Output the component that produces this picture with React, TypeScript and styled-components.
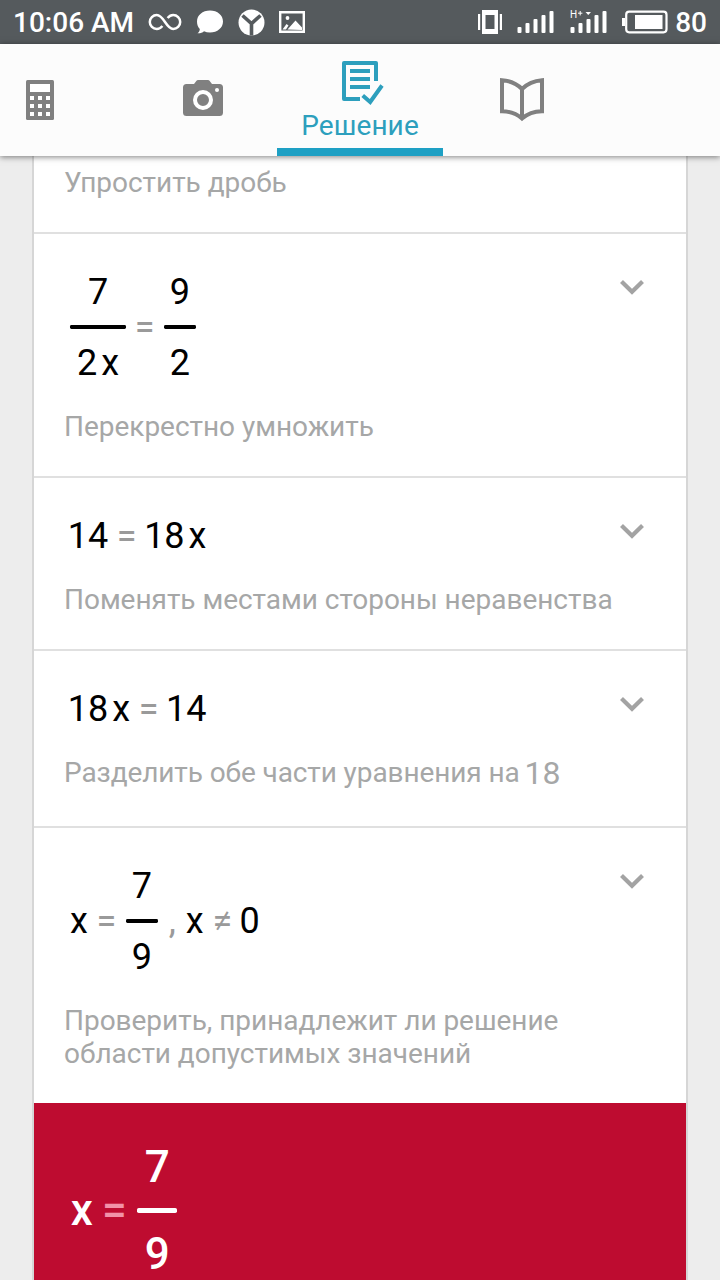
import React from "react";
import styled, { createGlobalStyle } from "styled-components";

const GlobalStyle = createGlobalStyle`
  * { box-sizing: border-box; }
  body { margin: 0; font-family: Roboto, "Liberation Sans", sans-serif; background: #ededed; overflow: hidden; }
  svg { display: block; flex: none; }
`;

const Screen = styled.div`
  display: flex;
  flex-direction: column;
  width: 720px;
  height: 1280px;
  overflow: hidden;
  background: #ededed;
`;

const StatusBar = styled.div`
  display: flex;
  flex: none;
  align-items: center;
  justify-content: space-between;
  height: 44px;
  padding: 0 13px 0 13px;
  background: #555a5d;
  color: #fff;
`;

const StatusGroup = styled.div<{ $gap: number }>`
  display: flex;
  align-items: center;
  gap: ${(p) => p.$gap}px;
`;

const StatusText = styled.span`
  padding-top: 1px;
  font-size: 28px;
  line-height: 43px;
  font-weight: 500;
`;

const TabBar = styled.nav`
  position: relative;
  z-index: 1;
  display: flex;
  flex: none;
  height: 112px;
  background: #fcfcfc;
  box-shadow: 0 1px 6px rgba(0, 0, 0, 0.5);
`;

const Tab = styled.div<{ $width: number; $inset?: number; $active?: boolean }>`
  display: flex;
  flex-direction: column;
  flex: none;
  align-items: center;
  justify-content: ${(p) => (p.$active ? "flex-start" : "center")};
  width: ${(p) => p.$width}px;
  padding-top: ${(p) => (p.$active ? "17px" : "0")};
  padding-left: ${(p) => p.$inset ?? 0}px;
  border-bottom: ${(p) => (p.$active ? "8px solid #1ea0c4" : "none")};
  color: ${(p) => (p.$active ? "#2d9fbd" : "#808080")};
`;

const TabLabel = styled.span`
  margin-top: 4px;
  font-size: 28px;
  line-height: 34px;
  letter-spacing: 0.1px;
`;

const Card = styled.main`
  flex: none;
  width: 656px;
  margin: 0 32px;
  border: solid #d6d6d6;
  border-width: 0 2px;
  background: #fff;
`;

const Step = styled.section<{ $top?: number }>`
  display: flex;
  flex-direction: column;
  gap: 26px;
  padding: ${(p) => p.$top ?? 37}px 30px 33px;
  & + & { border-top: 2px solid #e0e0e0; }
`;

const StepHead = styled.div`
  display: flex;
  align-items: flex-start;
  justify-content: space-between;
  padding: 0 11px 0 3px;
`;

const Answer = styled.section`
  display: flex;
  height: 200px;
  padding: 39px 33px 0;
  background: #be0c30;
`;

const Caption = styled.p<{ $tall?: boolean }>`
  margin: 0;
  height: ${(p) => (p.$tall ? "37px" : "auto")};
  color: #a6a7a7;
  font-size: 28px;
  line-height: 33px;
  letter-spacing: ${(p) => (p.$tall ? "-0.1px" : "-0.03px")};
  white-space: nowrap;
`;

const CaptionNumber = styled.span`
  margin-left: -2px;
  font-size: 32px;
  line-height: 0;
  letter-spacing: 0;
  vertical-align: -2px;
`;

const Equation = styled.div<{ $answer?: boolean }>`
  display: flex;
  align-items: center;
  color: ${(p) => (p.$answer ? "#fff" : "#000")};
  font-size: ${(p) => (p.$answer ? 44 : 36)}px;
  font-weight: ${(p) => (p.$answer ? 500 : 400)};
  line-height: 1.1667;
  align-self: flex-start;
  --sign: ${(p) => (p.$answer ? "#f292a8" : "#9a9a9a")};
`;

const Sign = styled.span<{ $tight?: boolean }>`
  margin: ${(p) => (p.$tight ? "0 0.19em 0 0.21em" : "0 0.21em 0 0.24em")};
  color: var(--sign);
`;

const Comma = styled.span`
  margin: 0 0.27em 0 0.3em;
  color: var(--sign);
`;

const Variable = styled.span<{ $first?: boolean }>`
  margin-left: ${(p) => (p.$first ? "0.085em" : "0")};
`;

const Product = styled.span<{ $first?: boolean }>`
  display: flex;
  gap: 0.11em;
  margin-left: ${(p) => (p.$first ? "0.02em" : "0")};
`;

const Constant = styled.span`
  margin-left: 0.02em;
`;

const Fraction = styled.span<{ $first?: boolean }>`
  display: flex;
  flex-direction: column;
  align-items: center;
  margin-left: ${(p) => (p.$first ? "0.083em" : "0.05em")};
`;

const Bar = styled.span<{ $wide?: boolean }>`
  width: ${(p) => (p.$wide ? "1.556em" : "0.9em")};
  height: 0.111em;
  margin: 0.333em 0 0.361em;
  border-radius: 0.04em;
  background: currentColor;
`;

const ChevronIcon = styled.svg`
  margin-top: 8px;
`;

const Chevron = () => (
  <ChevronIcon width="26" height="18" viewBox="0 0 26 18">
    <path d="M2.500 2.500 13 12.800 23.500 2.500" fill="none" stroke="#a3a3a3" strokeWidth="4.200" />
  </ChevronIcon>
);

const InfinityIcon = () => (
  <svg width="34" height="20" viewBox="0 0 34 20" fill="none" stroke="#fff" strokeWidth="2.500">
    <path d="M14.400 14C12.800 15.900 11.100 17 8.800 17a7 7 0 0 1 0-14C12 3 14 5.500 17 10s5 7 8.200 7a7 7 0 0 0 0-14c-2.300 0-4 1.100-5.600 3" />
  </svg>
);

const ChatIcon = () => (
  <svg width="28" height="24" viewBox="0 0 28 24" fill="#fff">
    <path d="M14 .5c7.500 0 13 4.700 13 11s-5.500 11-13 11c-2.300 0-4.300-.4-6-1.200-1.600 1.500-4 2.200-6.500 2 1.400-1 2.300-2.500 2.300-4.300C2 17 1 14.500 1 11.500 1 5.200 6.500.5 14 .5Z" />
  </svg>
);

const BrowserIcon = () => (
  <svg width="27" height="27" viewBox="0 0 27 27">
    <circle cx="13.500" cy="13.500" r="13" fill="#fff" />
    <path d="M4.500 6.500 13.500 14.500 22.500 6.500M13.500 14v12.500" fill="none" stroke="#555a5d" strokeWidth="3.600" />
  </svg>
);

const PictureIcon = () => (
  <svg width="26" height="22" viewBox="0 0 26 22">
    <path d="M1.200 1.200h23.600v19.600H1.200z" fill="none" stroke="#fff" strokeWidth="2.400" />
    <circle cx="8.500" cy="7" r="1.900" fill="#fff" />
    <path d="M3.500 18.500 7.500 13l2 1.500-2.500 4zM8.500 18.500l8-9 6.500 7v2.500z" fill="#fff" />
  </svg>
);

const VibrateIcon = () => (
  <svg width="24" height="24" viewBox="0 0 24 24" fill="#fff">
    <path d="M0 4h2.200v16H0zM21.800 4H24v16h-2.200z" />
    <path fillRule="evenodd" d="M4 0h16v24H4zM7.500 5v14h9V5z" />
  </svg>
);

const SignalIcon = ({ data = false }: { data?: boolean }) => (
  <svg width="37" height="24" viewBox="0 0 37 24" fill="#fff">
    <rect x="0.500" y="17" width="4" height="6" rx="1" />
    <rect x="8.500" y="13" width="4" height="10" rx="1" />
    <rect x="16.500" y="9" width="4" height="14" rx="1" />
    <rect x="24.500" y="5" width="4" height="18" rx="1" />
    <rect x="32.500" y="1" width="4" height="22" rx="1" />
    {data && (
      <>
        <text x="0" y="8" fontSize="10">H</text>
        <path d="M8 3.200h4.400M10.200 1v4.400" stroke="#fff" strokeWidth="1" />
        <path d="M15.500 2h5.500l-2.750 3z" />
      </>
    )}
  </svg>
);

const BatteryIcon = () => (
  <svg width="46" height="24" viewBox="0 0 46 24">
    <rect x="4.200" y="1.700" width="40.300" height="20.600" rx="3" fill="none" stroke="#fff" strokeWidth="2.200" />
    <path d="M0 8h3v8H0z" fill="#fff" />
    <rect x="13" y="5" width="27.500" height="14" fill="#fff" />
  </svg>
);

const CalculatorIcon = () => (
  <svg width="28" height="40" viewBox="0 0 28 40" fill="currentColor">
    <rect width="28" height="40" rx="1.500" />
    <path fill="#fff" d="M4 4h20v8H4zM4 16h4v4H4zM12 16h4v4h-4zM20 16h4v4h-4zM4 24h4v4H4zM12 24h4v4h-4zM20 24h4v4h-4zM4 32h4v4H4zM12 32h4v4h-4zM20 32h4v4h-4z" />
  </svg>
);

const CameraSvg = styled.svg`
  margin-top: -4px;
`;

const CameraIcon = () => (
  <CameraSvg width="40" height="36" viewBox="0 0 40 36" fill="currentColor">
    <path d="M3.500 4H11l2.500-3.200Q14 0 15 0h10q1 0 1.500.8L29 4h7.500Q40 4 40 7.500v25q0 3.500-3.500 3.500h-33Q0 36 0 32.500v-25Q0 4 3.500 4Z" />
    <circle cx="20" cy="20" r="8" fill="none" stroke="#fff" strokeWidth="4" />
    <circle cx="34" cy="10" r="2" fill="#fff" />
  </CameraSvg>
);

const SolutionIcon = () => (
  <svg width="48" height="44" viewBox="0 0 48 44" fill="none" stroke="currentColor" strokeWidth="4">
    <path d="M24 38H8V2H40V20" strokeLinejoin="round" />
    <path d="M14 10h20M14 18h20M14 26h20" />
    <path d="M26.700 34.500 34.200 41 46 24.500" />
  </svg>
);

const BookIcon = () => (
  <svg width="44" height="44" viewBox="0 0 44 44" fill="none" stroke="currentColor" strokeWidth="4">
    <path d="M2 2.200Q14 3 22 11 30 3 42 2.200V33.200Q30 33.500 22 40.500 14 33.500 2 33.200ZM22 11v29" />
  </svg>
);

export default function App() {
  return (
    <Screen>
      <GlobalStyle />
      <StatusBar>
        <StatusGroup $gap={14}>
          <StatusText>10:06 AM</StatusText>
          <InfinityIcon />
          <ChatIcon />
          <BrowserIcon />
          <PictureIcon />
        </StatusGroup>
        <StatusGroup $gap={15.5}>
          <VibrateIcon />
          <SignalIcon />
          <SignalIcon data />
          <StatusGroup $gap={7}>
            <BatteryIcon />
            <StatusText>80</StatusText>
          </StatusGroup>
        </StatusGroup>
      </StatusBar>
      <TabBar>
        <Tab $width={80}><CalculatorIcon /></Tab>
        <Tab $width={197} $inset={49}><CameraIcon /></Tab>
        <Tab $width={166} $active>
          <SolutionIcon />
          <TabLabel>Решение</TabLabel>
        </Tab>
        <Tab $width={158}><BookIcon /></Tab>
      </TabBar>
      <Card>
        <Step $top={10}>
          <Caption>Упростить дробь</Caption>
        </Step>
        <Step>
          <StepHead>
            <Equation>
              <Fraction $first>
                <span>7</span>
                <Bar $wide />
                <Product><span>2</span><span>x</span></Product>
              </Fraction>
              <Sign>=</Sign>
              <Fraction>
                <span>9</span>
                <Bar />
                <span>2</span>
              </Fraction>
            </Equation>
            <Chevron />
          </StepHead>
          <Caption>Перекрестно умножить</Caption>
        </Step>
        <Step>
          <StepHead>
            <Equation>
              <Constant>14</Constant>
              <Sign>=</Sign>
              <Product><span>18</span><span>x</span></Product>
            </Equation>
            <Chevron />
          </StepHead>
          <Caption>Поменять местами стороны неравенства</Caption>
        </Step>
        <Step>
          <StepHead>
            <Equation>
              <Product $first><span>18</span><span>x</span></Product>
              <Sign>=</Sign>
              <span>14</span>
            </Equation>
            <Chevron />
          </StepHead>
          <Caption $tall>
            Разделить обе части уравнения на <CaptionNumber>18</CaptionNumber>
          </Caption>
        </Step>
        <Step>
          <StepHead>
            <Equation>
              <Variable $first>x</Variable>
              <Sign>=</Sign>
              <Fraction>
                <span>7</span>
                <Bar />
                <span>9</span>
              </Fraction>
              <Comma>,</Comma>
              <Variable>x</Variable>
              <Sign>≠</Sign>
              <span>0</span>
            </Equation>
            <Chevron />
          </StepHead>
          <Caption>
            Проверить, принадлежит ли решение
            <br />
            области допустимых значений
          </Caption>
        </Step>
        <Answer>
          <Equation $answer>
            <Variable $first>x</Variable>
            <Sign $tight>=</Sign>
            <Fraction>
              <span>7</span>
              <Bar />
              <span>9</span>
            </Fraction>
          </Equation>
        </Answer>
      </Card>
    </Screen>
  );
}
